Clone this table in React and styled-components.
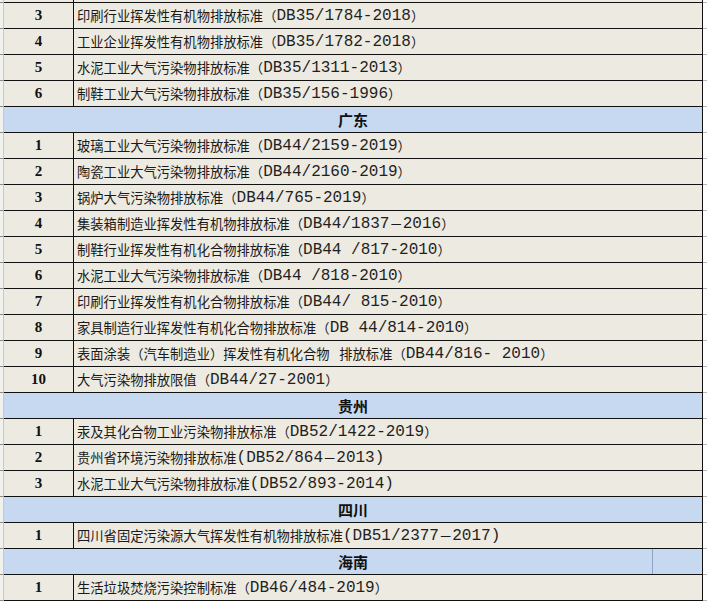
import React from "react";
import styled, { createGlobalStyle } from "styled-components";

const Global = createGlobalStyle`
  html, body { margin: 0; padding: 0; background: #ffffff; }
  body { font-family: "Noto Sans CJK SC", sans-serif; }
`;

const Sheet = styled.div`
  width: 707px;
  display: flex;
  flex-direction: column;
`;

const Row = styled.div`
  display: grid;
  grid-template-columns: 4px 70px 629px 4px;
  height: ${(p) => (p.$partial ? 3 : 26)}px;
`;

const Gutter = styled.div`
  background: #f1f1ee;
  border-right: 1px solid #c9c9c4;
  border-bottom: 1px solid #8d8d88;
`;

const Tail = styled.div`
  background: #ffffff;
  border-bottom: 1px solid #b8b8b8;
`;

const NumCell = styled.div`
  background: #edeae1;
  border-right: 1px solid #111;
  border-bottom: 1px solid #111;
  display: flex;
  align-items: center;
  justify-content: center;
  font-family: "Liberation Serif", serif;
  font-weight: 700;
  font-size: 15px;
  color: #111;
`;

const TextCell = styled.div`
  background: #edeae1;
  border-right: 1px solid #111;
  border-bottom: 1px solid #111;
  display: flex;
  align-items: center;
  padding-left: 3px;
  white-space: pre;
  overflow: hidden;
  font-family: "Noto Sans CJK SC", sans-serif;
  font-size: 13.3px;
  color: #1a1a1a;
`;

const Latin = styled.span`
  font-family: "Liberation Mono", monospace;
  font-size: 16px;
  color: #1f1f1f;
`;

const HeaderCell = styled.div`
  grid-column: span 2;
  position: relative;
  background: #c6d9f0;
  border-right: 1px solid #111;
  border-bottom: 1px solid #111;
  display: flex;
  align-items: center;
  justify-content: center;
  font-family: "Noto Sans CJK SC", sans-serif;
  font-weight: 700;
  font-size: 15px;
  color: #111;
`;

const Split = styled.span`
  position: absolute;
  top: 0;
  bottom: 0;
  left: ${(p) => p.$at}px;
  width: 1px;
  background: #8ea4c2;
`;

function Mixed({ text }) {
  const parts = text.split(/([\x20-\x7E]+)/).filter(Boolean);
  return parts.map((s, i) =>
    /^[\x20-\x7E]+$/.test(s) ? <Latin key={i}>{s}</Latin> : <span key={i}>{s}</span>
  );
}

const rows = [
  { n: "3", t: "印刷行业挥发性有机物排放标准（DB35/1784-2018）" },
  { n: "4", t: "工业企业挥发性有机物排放标准（DB35/1782-2018）" },
  { n: "5", t: "水泥工业大气污染物排放标准（DB35/1311-2013）" },
  { n: "6", t: "制鞋工业大气污染物排放标准（DB35/156-1996）" },
  { h: "广东" },
  { n: "1", t: "玻璃工业大气污染物排放标准（DB44/2159-2019）" },
  { n: "2", t: "陶瓷工业大气污染物排放标准（DB44/2160-2019）" },
  { n: "3", t: "锅炉大气污染物排放标准（DB44/765-2019）" },
  { n: "4", t: "集装箱制造业挥发性有机物排放标准（DB44/1837－2016）" },
  { n: "5", t: "制鞋行业挥发性有机化合物排放标准（DB44 /817-2010）" },
  { n: "6", t: "水泥工业大气污染物排放标准（DB44 /818-2010）" },
  { n: "7", t: "印刷行业挥发性有机化合物排放标准（DB44/ 815-2010）" },
  { n: "8", t: "家具制造行业挥发性有机化合物排放标准（DB 44/814-2010）" },
  { n: "9", t: "表面涂装（汽车制造业）挥发性有机化合物 排放标准（DB44/816- 2010）" },
  { n: "10", t: "大气污染物排放限值（DB44/27-2001）" },
  { h: "贵州" },
  { n: "1", t: "汞及其化合物工业污染物排放标准（DB52/1422-2019）" },
  { n: "2", t: "贵州省环境污染物排放标准(DB52/864－2013)" },
  { n: "3", t: "水泥工业大气污染物排放标准(DB52/893-2014)" },
  { h: "四川" },
  { n: "1", t: "四川省固定污染源大气挥发性有机物排放标准(DB51/2377－2017)" },
  { h: "海南", split: 648 },
  { n: "1", t: "生活垃圾焚烧污染控制标准（DB46/484-2019）" },
];

export default function App() {
  return (
    <>
      <Global />
      <Sheet>
        <Row $partial>
          <Gutter />
          <NumCell />
          <TextCell />
          <Tail />
        </Row>
        {rows.map((r, i) =>
          r.h ? (
            <Row key={i}>
              <Gutter />
              <HeaderCell>
                {r.h}
                {r.split ? <Split $at={r.split} /> : null}
              </HeaderCell>
              <Tail />
            </Row>
          ) : (
            <Row key={i}>
              <Gutter />
              <NumCell>{r.n}</NumCell>
              <TextCell>
                <Mixed text={r.t} />
              </TextCell>
              <Tail />
            </Row>
          )
        )}
      </Sheet>
    </>
  );
}
